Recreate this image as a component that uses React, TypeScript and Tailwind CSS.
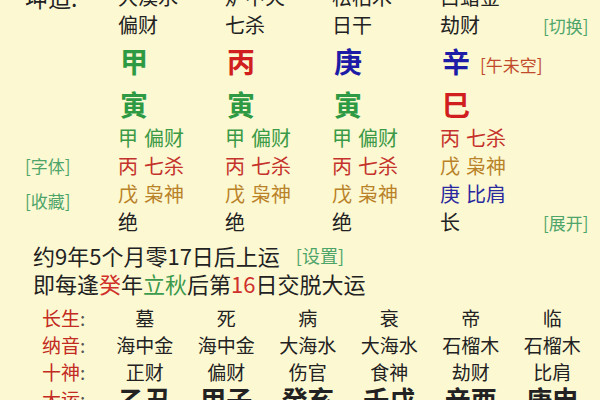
import React from "react";

type Hidden = { stem: string; god: string; color: string };
type Pillar = {
  nayin: string;
  god: string;
  stem: string;
  stemColor: string;
  branch: string;
  branchColor: string;
  hidden: Hidden[];
  stage: string;
  width: string;
};

const G = "text-[#3b9a45]";
const R = "text-[#c5322b]";
const O = "text-[#b98229]";
const B = "text-[#2a2a9e]";

const pillars: Pillar[] = [
  {
    nayin: "大溪水",
    god: "偏财",
    stem: "甲",
    stemColor: "text-[#2e9a43]",
    branch: "寅",
    branchColor: "text-[#2e9a43]",
    hidden: [
      { stem: "甲", god: "偏财", color: G },
      { stem: "丙", god: "七杀", color: R },
      { stem: "戊", god: "枭神", color: O },
    ],
    stage: "绝",
    width: "w-[107px]",
  },
  {
    nayin: "炉中火",
    god: "七杀",
    stem: "丙",
    stemColor: "text-[#d11f1f]",
    branch: "寅",
    branchColor: "text-[#2e9a43]",
    hidden: [
      { stem: "甲", god: "偏财", color: G },
      { stem: "丙", god: "七杀", color: R },
      { stem: "戊", god: "枭神", color: O },
    ],
    stage: "绝",
    width: "w-[107px]",
  },
  {
    nayin: "松柏木",
    god: "日干",
    stem: "庚",
    stemColor: "text-[#1c1ca6]",
    branch: "寅",
    branchColor: "text-[#2e9a43]",
    hidden: [
      { stem: "甲", god: "偏财", color: G },
      { stem: "丙", god: "七杀", color: R },
      { stem: "戊", god: "枭神", color: O },
    ],
    stage: "绝",
    width: "w-[108px]",
  },
  {
    nayin: "白蜡金",
    god: "劫财",
    stem: "辛",
    stemColor: "text-[#1c1ca6]",
    branch: "巳",
    branchColor: "text-[#d11f1f]",
    hidden: [
      { stem: "丙", god: "七杀", color: R },
      { stem: "戊", god: "枭神", color: O },
      { stem: "庚", god: "比肩", color: B },
    ],
    stage: "长",
    width: "w-[103px]",
  },
];

const table = [
  { label: "长生", cells: ["墓", "死", "病", "衰", "帝", "临"] },
  { label: "纳音", cells: ["海中金", "海中金", "大海水", "大海水", "石榴木", "石榴木"] },
  { label: "十神", cells: ["正财", "偏财", "伤官", "食神", "劫财", "比肩"] },
];

const dayun = ["乙丑", "甲子", "癸亥", "壬戌", "辛酉", "庚申"];

export default function App() {
  return (
    <div className="w-[600px] h-[400px] overflow-hidden bg-[#fcf8d2] text-[#222] font-['Noto_Sans_CJK_SC',sans-serif] leading-none">
      {/* pillars */}
      <div className="flex h-[28px] mt-[-17px] items-center text-[20px]">
        <div className="w-[118px] pl-[25px] text-[23px]">坤造:</div>
        {pillars.map((p, i) => (
          <div key={i} className={p.width}>{p.nayin}</div>
        ))}
      </div>
      <div className="flex h-[28px] items-center text-[20px]">
        <div className="w-[118px]" />
        {pillars.map((p, i) => (
          <div key={i} className={p.width}>{p.god}</div>
        ))}
        <div className="flex-1 text-[17px] text-[#4ea56a]">[切换]</div>
      </div>
      <div className="flex h-[44px] items-center text-[28px] font-bold">
        <div className="w-[118px]" />
        {pillars.map((p, i) => (
          <div key={i} className={`${p.width} flex items-center`}>
            <span className={`${p.stemColor} pl-[2px]`}>{p.stem}</span>
            {i === 3 && (
              <span className="ml-[10px] mt-[6px] text-[17px] font-normal text-[#c14a2c]">[午未空]</span>
            )}
          </div>
        ))}
      </div>
      <div className="flex h-[41px] items-center text-[28px] font-bold">
        <div className="w-[118px]" />
        {pillars.map((p, i) => (
          <div key={i} className={p.width}>
            <span className={`${p.branchColor} pl-[2px]`}>{p.branch}</span>
          </div>
        ))}
      </div>

      {/* hidden stems */}
      <div className="flex text-[20px]">
        <div className="w-[118px] pl-[25px] flex flex-col text-[17px] text-[#4ea56a]">
          <div className="mt-[28px] h-[26px] flex items-center">[字体]</div>
          <div className="mt-[9px] h-[26px] flex items-center">[收藏]</div>
        </div>
        {pillars.map((p, i) => (
          <div key={i} className={`${p.width} flex flex-col`}>
            {p.hidden.map((h, j) => (
              <div key={j} className={`h-[28px] flex items-center gap-[6px] ${h.color}`}>
                <span>{h.stem}</span>
                <span>{h.god}</span>
              </div>
            ))}
            <div className="h-[28px] flex items-center">{p.stage}</div>
          </div>
        ))}
        <div className="flex-1 flex flex-col justify-end">
          <div className="h-[28px] flex items-center text-[17px] text-[#4ea56a]">[展开]</div>
        </div>
      </div>

      {/* luck info */}
      <div className="mt-[5px] pl-[33px] text-[22px]">
        <div className="h-[28px] flex items-center">
          <span>约9年5个月零17日后上运</span>
          <span className="ml-[16px] text-[18px] text-[#4ea56a]">[设置]</span>
        </div>
        <div className="h-[28px] flex items-center">
          即每逢<span className="text-[#d0302a]">癸</span>年
          <span className="text-[#3c9a4c]">立秋</span>后第
          <span className="text-[#d0302a]">16</span>日交脱大运
        </div>
      </div>

      <div className="mt-[7px] text-[19px]">
        {table.map((row) => (
          <div key={row.label} className="flex h-[27px] items-center">
            <div className="w-[104px] pl-[42px] text-[#c22a22]">
              {row.label}
              <span className="text-[#555]">:</span>
            </div>
            {row.cells.map((c, i) => (
              <div key={i} className="w-[81.5px] text-center">{c}</div>
            ))}
          </div>
        ))}
        <div className="flex h-[27px] items-center">
          <div className="w-[104px] pl-[42px] text-[#c22a22]">
            大运<span className="text-[#555]">:</span>
          </div>
          {dayun.map((c, i) => (
            <div key={i} className="w-[81.5px] text-center text-[26px] font-bold">{c}</div>
          ))}
        </div>
      </div>
    </div>
  );
}
